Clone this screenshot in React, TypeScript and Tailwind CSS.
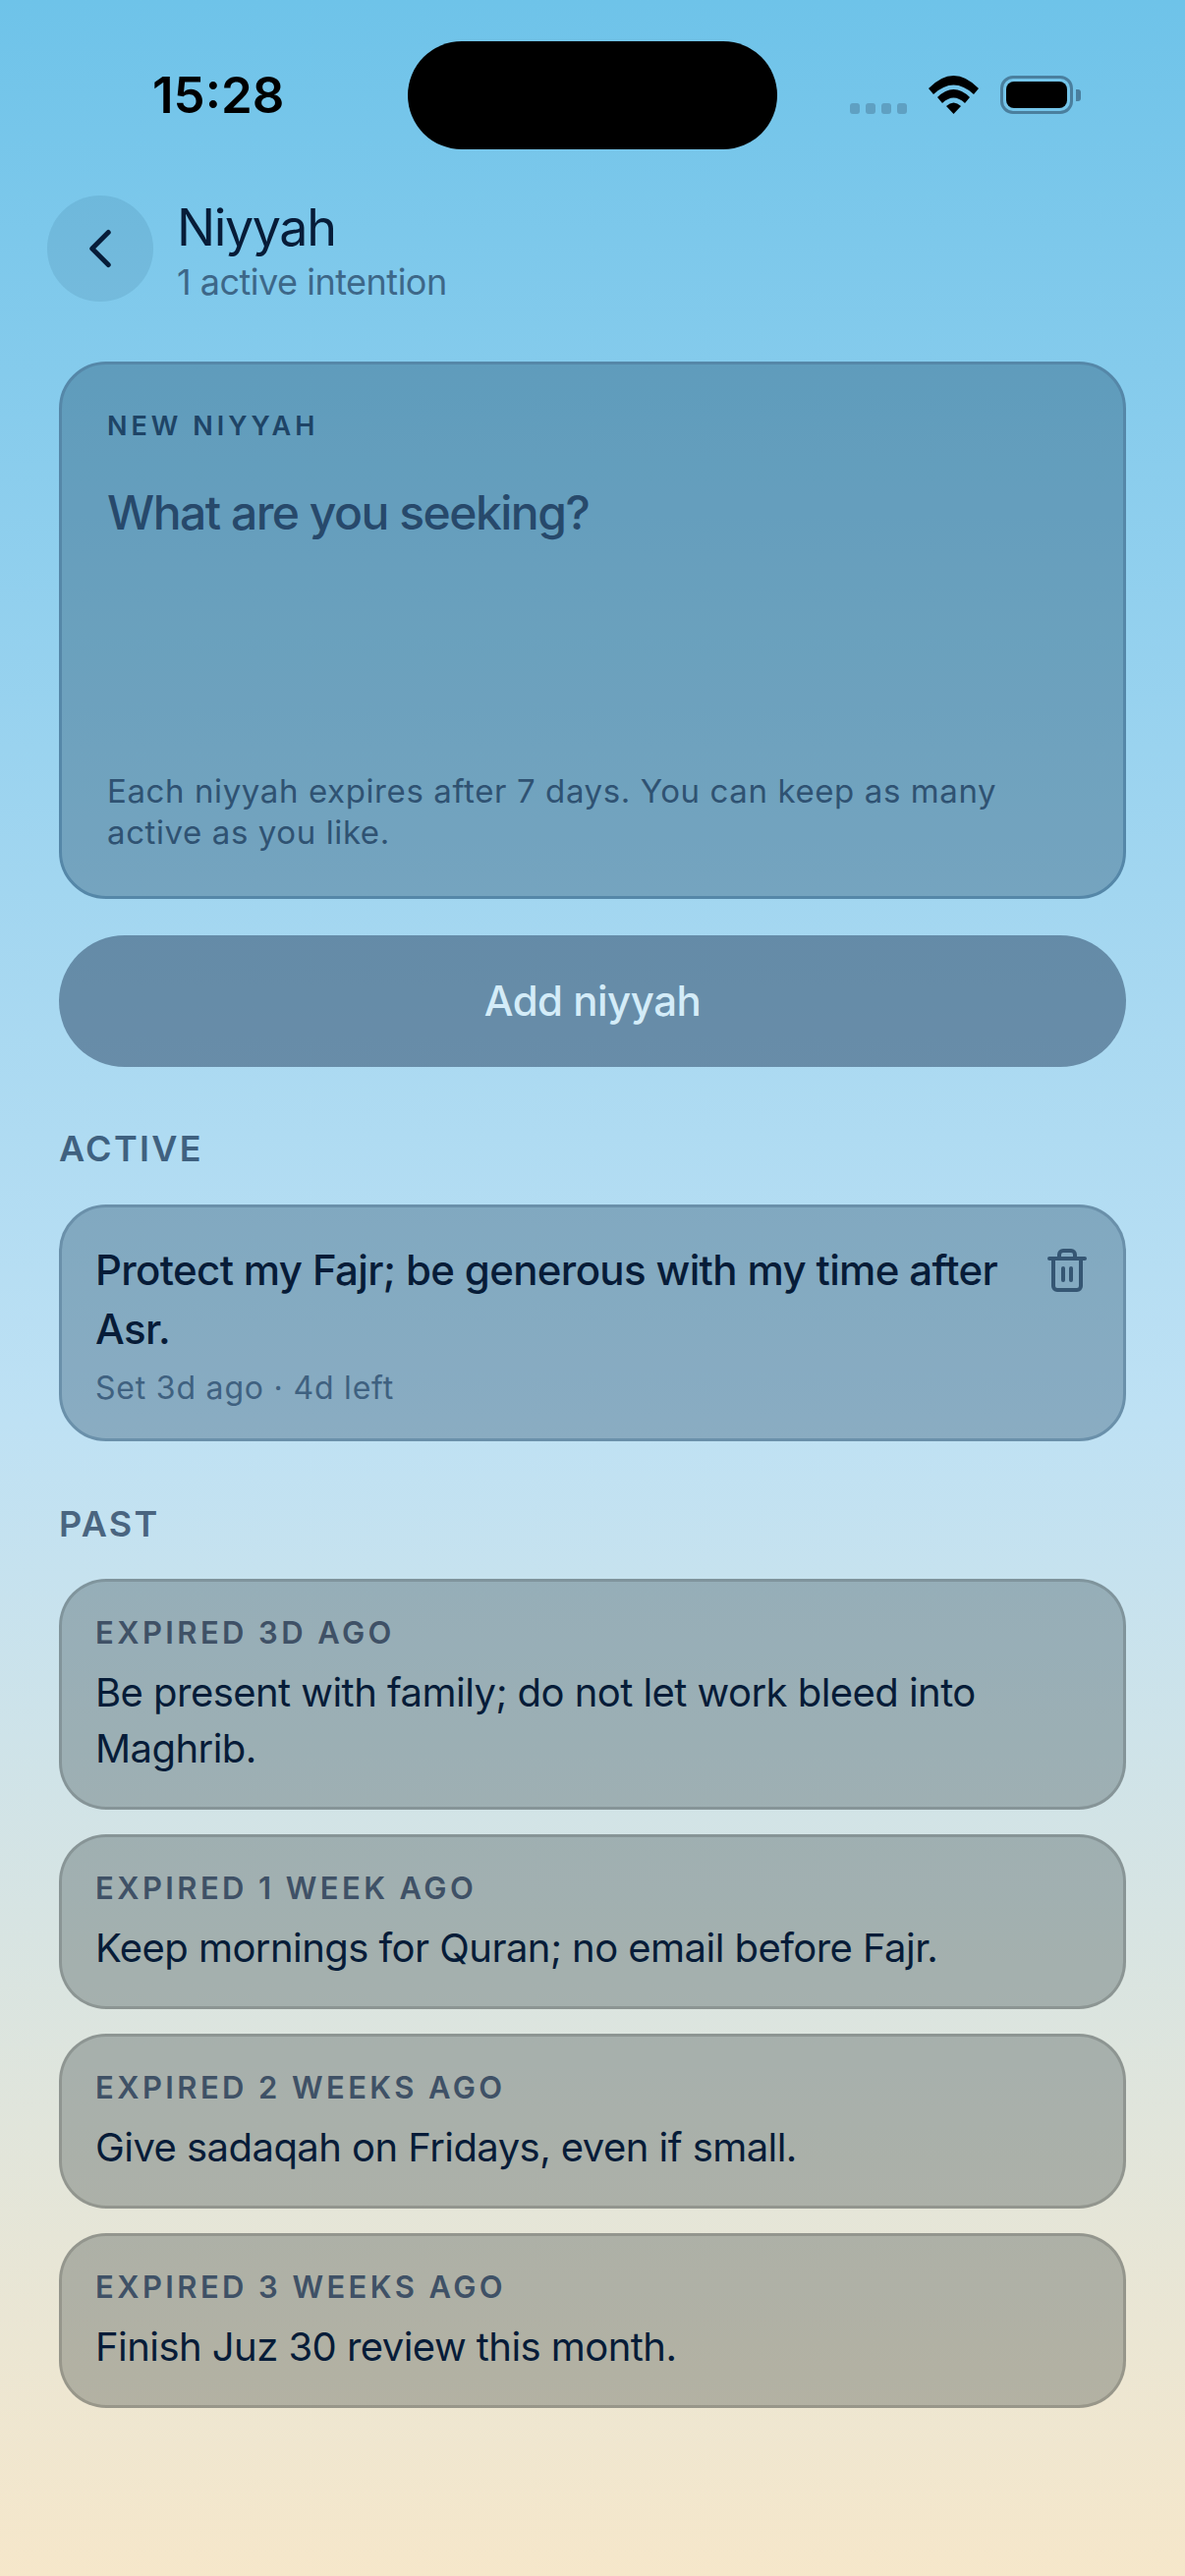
import { ChevronLeft, Trash2 } from "lucide-react";

const pastItems = [
  { label: "EXPIRED 3D AGO", text: "Be present with family; do not let work bleed into Maghrib." },
  { label: "EXPIRED 1 WEEK AGO", text: "Keep mornings for Quran; no email before Fajr." },
  { label: "EXPIRED 2 WEEKS AGO", text: "Give sadaqah on Fridays, even if small." },
  { label: "EXPIRED 3 WEEKS AGO", text: "Finish Juz 30 review this month." },
];

function StatusBar() {
  return (
    <div className="flex items-center h-[110px] pt-0 mt-[42px]">
      <div className="w-[415px] pl-[155px] text-[51px] leading-[60px] font-semibold text-black">15:28</div>
      <div className="w-[376px] h-[110px] rounded-[55px] bg-black" />
      <div className="flex items-start h-[39px] ml-[74px] mt-[-1px]">
        <div className="flex gap-[6px] mt-[28px]">
          <div className="w-[10px] h-[11px] rounded-[3px] bg-[#5fa0c2]" />
          <div className="w-[10px] h-[11px] rounded-[3px] bg-[#5fa0c2]" />
          <div className="w-[10px] h-[11px] rounded-[3px] bg-[#5fa0c2]" />
          <div className="w-[10px] h-[11px] rounded-[3px] bg-[#5fa0c2]" />
        </div>
        <svg className="ml-[22px]" width="51" height="39" viewBox="0 0 51 39">
          <path d="M0 13 Q25.500 -13 51 13 L46 19 Q25.500 0 5 19 Z" fill="#000" />
          <path d="M9 22 Q25.500 6 42 22 L37 28 Q25.500 17 14 28 Z" fill="#000" />
          <path d="M18 31 Q25.500 24 33 31 L25.500 39 Z" fill="#000" />
        </svg>
        <div className="flex items-center ml-[22px]">
          <div className="w-[74px] h-[39px] rounded-[13px] border-[3px] border-[#4a7f9e] p-[3px]">
            <div className="w-full h-full rounded-[8px] bg-black" />
          </div>
          <div className="w-[5px] h-[12px] ml-[3px] rounded-r-[3px] bg-[#4a7f9e]" />
        </div>
      </div>
    </div>
  );
}

export default function App() {
  return (
    <div className="min-h-[2622px] bg-gradient-to-b from-[#6ec3e9] via-[#bee1f4] via-55% to-[#f6e7ca] font-[family-name:Inter,sans-serif] text-[#071c38] overflow-hidden">
      <StatusBar />

      <div className="flex items-center h-[108px] mt-[47px] pl-[48px]">
        <div className="w-[108px] h-[108px] rounded-full bg-[#0a3a5c]/10 flex items-center justify-center">
          <ChevronLeft size={66} strokeWidth={1.8} className="text-[#071c38]" />
        </div>
        <div className="ml-[24px] pt-[3px]">
          <div className="text-[52px] leading-[62px] tracking-[-1.4px]">Niyyah</div>
          <div className="mt-[2px] text-[36px] leading-[44px] tracking-[-0.5px] text-[#3d6788]">1 active intention</div>
        </div>
      </div>

      <div className="mx-[60px] mt-[61px]">
        <div className="h-[547px] rounded-[48px] border-[3px] border-[#5587a8] bg-[#012340]/28 pl-[46px] pr-[46px] pt-[46px] flex flex-col">
          <div className="text-[27px] leading-[34px] font-semibold tracking-[4px] text-[#1e4466]">NEW NIYYAH</div>
          <div className="mt-[39px] text-[48px] leading-[64px] font-medium tracking-[-1.5px] text-[#27496b]">What are you seeking?</div>
          <div className="mt-auto mb-[44px] text-[33px] leading-[42px] tracking-[0.6px] text-[#2f5272]">
            Each niyyah expires after 7 days. You can keep as many active as you like.
          </div>
        </div>

        <button className="w-full h-[134px] mt-[37px] pb-[2px] rounded-[67px] bg-[#112847]/43 text-[42px] font-medium tracking-[-0.5px] text-[#d4ecf8]">
          Add niyyah
        </button>

        <div className="mt-[61px] text-[36px] leading-[44px] font-semibold tracking-[2.3px] text-[#3f6180]">ACTIVE</div>

        <div className="mt-[35px] h-[241px] rounded-[48px] border-[3px] border-[#6a90aa] bg-[#012340]/28 pl-[34px] pr-[34px] pt-[34px] flex items-start justify-between">
          <div className="w-[930px]">
            <div className="text-[42px] leading-[60px] font-medium tracking-[-0.65px] text-[#071c38]">
              Protect my Fajr; be generous with my time after Asr.
            </div>
            <div className="mt-[10px] text-[32px] leading-[40px] tracking-[0.8px] text-[#3f6180]">Set 3d ago · 4d left</div>
          </div>
          <Trash2 size={48} strokeWidth={2} className="mt-[6px] mr-[-1px] text-[#355673]" />
        </div>

        <div className="mt-[62px] text-[36px] leading-[44px] font-semibold tracking-[2.3px] text-[#4a6580]">PAST</div>

        <div className="mt-[34px] flex flex-col gap-[25px]">
          {pastItems.map((item) => (
            <div key={item.label} className="rounded-[48px] border-[3px] border-[#000000]/15 bg-[#0a1a20]/26 px-[34px] pt-[32px] pb-[31px]">
              <div className="text-[31px] leading-[40px] font-semibold tracking-[3.4px] text-[#3f5166]">{item.label}</div>
              <div className="mt-[12px] text-[40px] leading-[57px] tracking-[-0.55px] text-[#071c38]">{item.text}</div>
            </div>
          ))}
        </div>
      </div>
    </div>
  );
}
